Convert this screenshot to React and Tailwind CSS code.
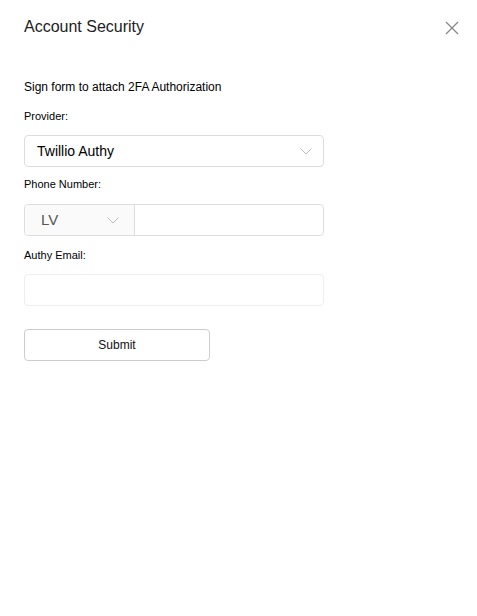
import { useState } from 'react';

const Chevron = ({ className }) => (
  <svg viewBox="0 0 12 7" className={className} fill="none" stroke="currentColor" strokeWidth="1">
    <path d="M0.5 0.5 L6 6 L11.5 0.5" />
  </svg>
);

const App = () => {
  const [phone, setPhone] = useState('');
  const [email, setEmail] = useState('');

  return (
    <div className="w-[477px] h-[616px] bg-white font-['Liberation_Sans',Arial,sans-serif] text-[#222]">
      <div className="flex items-center justify-between pl-6 pr-[18px] pt-[17px]">
        <h2 className="text-[16px] leading-[20px] text-[#222]">Account Security</h2>
        <button className="w-[14px] h-[14px] mt-[1px] text-[#888]">
          <svg viewBox="0 0 14 14" className="w-[14px] h-[14px]" fill="none" stroke="currentColor" strokeWidth="1.3">
            <path d="M1 1 L13 13 M13 1 L1 13" />
          </svg>
        </button>
      </div>

      <div className="pl-6 pt-[43px] w-[324px]">
        <p className="text-[12px] leading-[14px] text-black">Sign form to attach 2FA Authorization</p>

        <label className="block mt-[16px] text-[11px] leading-[13px] text-black">Provider:</label>
        <div className="mt-[12px] h-[32px] w-[300px] border border-[#ddd] rounded-[4px] flex items-center justify-between pl-[12px] pr-[11px]">
          <span className="text-[14px] text-black">Twillio Authy</span>
          <Chevron className="w-[12px] h-[7px] text-[#bbb]" />
        </div>

        <label className="block mt-[11px] text-[11px] leading-[13px] text-black">Phone Number:</label>
        <div className="mt-[13px] h-[32px] w-[300px] border border-[#ddd] rounded-[4px] flex overflow-hidden">
          <div className="w-[110px] shrink-0 bg-[#fafafa] border-r border-[#ddd] flex items-center justify-between pl-[16px] pr-[15px]">
            <span className="text-[15px] text-[#555]">LV</span>
            <Chevron className="w-[12px] h-[7px] text-[#bbb]" />
          </div>
          <input
            value={phone}
            onChange={(e) => setPhone(e.target.value)}
            className="flex-1 min-w-0 px-2 text-[14px] outline-none"
          />
        </div>

        <label className="block mt-[13px] text-[11px] leading-[13px] text-black">Authy Email:</label>
        <input
          value={email}
          onChange={(e) => setEmail(e.target.value)}
          className="block mt-[12px] h-[32px] w-[300px] border border-[#eee] rounded-[4px] px-2 text-[14px] outline-none"
        />

        <button className="mt-[23px] h-[32px] w-[186px] border border-[#ccc] rounded-[4px] bg-white text-[12px] leading-[28px] text-[#111]">
          Submit
        </button>
      </div>
    </div>
  );
};

export default App;
